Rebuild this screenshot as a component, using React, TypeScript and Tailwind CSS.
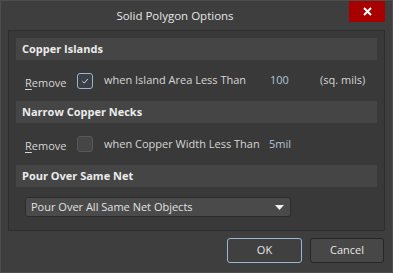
const font = { fontFamily: '"Open Sans", "Noto Sans", sans-serif' };

function Checkbox({ checked }: { checked: boolean }) {
  if (checked) {
    return (
      <div className="w-[16px] h-[16px] rounded-[3px] border border-[#9bb3cc] bg-[#3a3f45] flex items-center justify-center">
        <svg width="10" height="10" viewBox="0 0 10 10" fill="none">
          <path d="M2.3 5.2 L4.3 7 L7.8 3" stroke="#c9d6e3" strokeWidth="1" />
        </svg>
      </div>
    );
  }
  return <div className="w-[16px] h-[16px] rounded-[3px] border border-[#575757] bg-[#464646]" />;
}

function SectionHeader({ title }: { title: string }) {
  return (
    <div className="h-[22px] bg-[#454545] flex items-center pl-[6px] text-[11px] font-bold text-[#ececec]">
      {title}
    </div>
  );
}

function RemoveLabel() {
  return (
    <span className="text-[11px] text-[#d6d6d6]">
      <span className="underline underline-offset-2">R</span>emove
    </span>
  );
}

export default function App() {
  return (
    <div
      className="w-[393px] h-[273px] bg-[#3e3e3e] border border-[#4d4d4d] flex flex-col text-[#d6d6d6] overflow-hidden whitespace-nowrap"
      style={font}
    >
      {/* title bar */}
      <div className="h-[29px] flex items-start shrink-0">
        <div className="w-[348px] h-[29px] flex items-center justify-center text-[11.5px] text-[#e6e6e6]">
          Solid Polygon Options
        </div>
        <div className="w-[36px] h-[22px] bg-[#a80000] flex items-center justify-center -mt-px">
          <svg width="9" height="9" viewBox="0 0 9 9">
            <path d="M1 1 L8 8 M8 1 L1 8" stroke="#ffffff" strokeWidth="2" />
          </svg>
        </div>
      </div>

      {/* options panel */}
      <div className="ml-[7px] w-[377px] h-[201px] border border-[#2e2e2e] bg-[#393939] px-[7px] pt-[7px] flex flex-col">
        <SectionHeader title="Copper Islands" />
        <div className="h-[41px] flex items-center pl-[9px]">
          <div className="w-[52px]">
            <RemoveLabel />
          </div>
          <Checkbox checked />
          <span className="ml-[11px] w-[166px] text-[11px]">when Island Area Less Than</span>
          <span className="w-[50px] text-[11px] text-[#b4c6da]">100</span>
          <span className="text-[11px]">(sq. mils)</span>
        </div>
        <SectionHeader title="Narrow Copper Necks" />
        <div className="h-[42px] flex items-center pl-[9px]">
          <div className="w-[52px]">
            <RemoveLabel />
          </div>
          <Checkbox checked={false} />
          <span className="ml-[11px] w-[165px] text-[11px]">when Copper Width Less Than</span>
          <span className="text-[11px] text-[#b4c6da]">5mil</span>
        </div>
        <SectionHeader title="Pour Over Same Net" />
        <div className="pt-[10px] pl-[9px]">
          <div className="w-[266px] h-[20px] rounded-[3px] border border-[#2c2c2c] bg-[#4a4a4a] flex items-center justify-between pl-[5px] pr-[6px] text-[11px] text-[#e2e2e2]">
            <span>Pour Over All Same Net Objects</span>
            <svg width="9" height="5" viewBox="0 0 9 5">
              <path d="M0 0 L9 0 L4.5 5 Z" fill="#f0f0f0" />
            </svg>
          </div>
        </div>
      </div>

      {/* buttons */}
      <div className="flex justify-end gap-[8px] pr-[8px] pt-[7px]">
        <button className="w-[75px] h-[25px] rounded-[3px] border border-[#9ab6d2] bg-[#404040] text-[11px] text-[#e6e6e6]">
          OK
        </button>
        <button className="w-[74px] h-[25px] rounded-[3px] border border-[#262626] bg-[#474747] text-[11px] text-[#e6e6e6]">
          Cancel
        </button>
      </div>
    </div>
  );
}
